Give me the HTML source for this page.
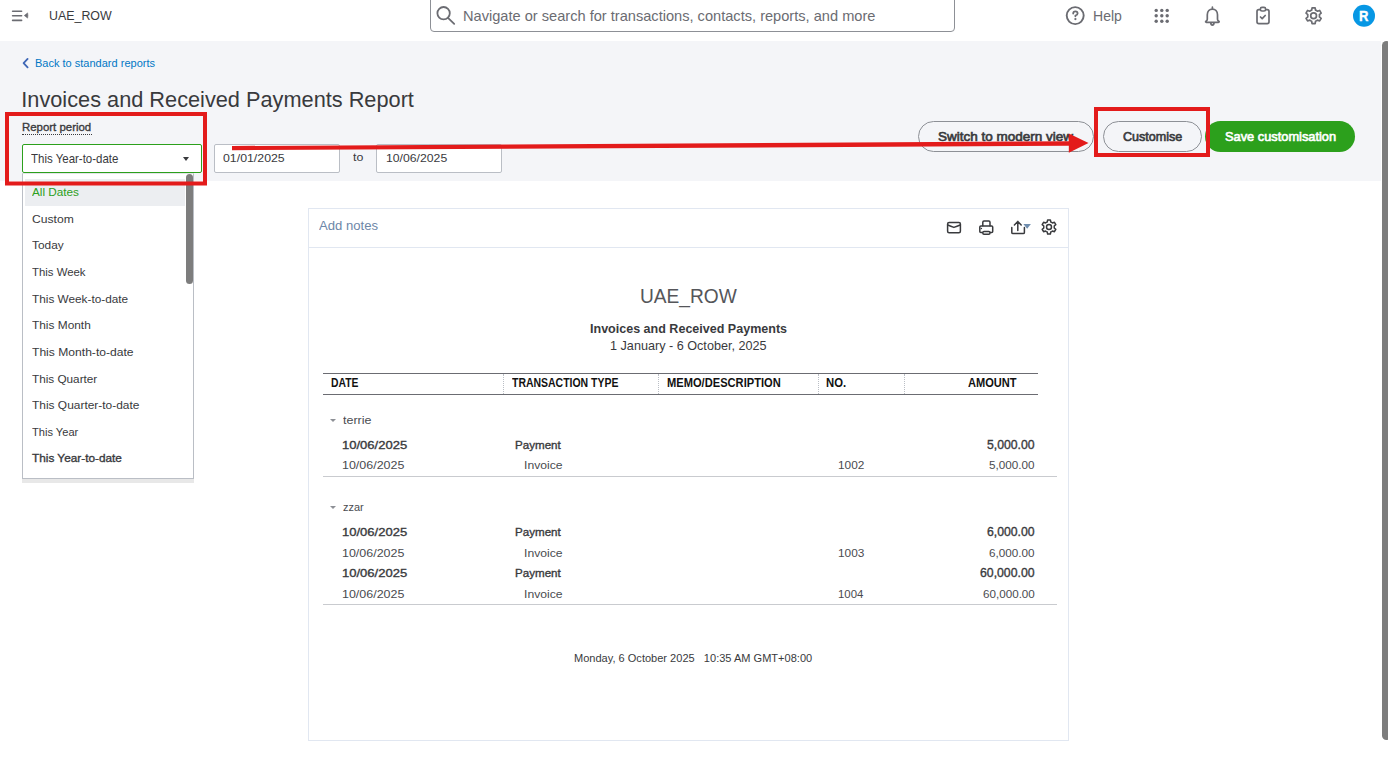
<!DOCTYPE html>
<html><head><meta charset="utf-8">
<style>
html,body{margin:0;padding:0;}
body{width:1388px;height:763px;overflow:hidden;position:relative;background:#fff;font-family:"Liberation Sans",sans-serif;}
.t{position:absolute;white-space:pre;transform-origin:0 0;}
.abs{position:absolute;}
.tri{position:absolute;width:0;height:0;border-left:3px solid transparent;border-right:3px solid transparent;border-top:3px solid #8D9096;}
</style></head><body>
<!-- header band -->
<div class="abs" style="left:0;top:41px;width:1381px;height:140px;background:#F4F5F8"></div>
<!-- page scrollbar -->
<div class="abs" style="left:1382px;top:41px;width:9px;height:699px;background:#7D7D7D;border-radius:4.5px"></div>

<!-- top bar icons -->
<svg class="abs" style="left:0;top:0" width="1388" height="41" viewBox="0 0 1388 41">
  <g stroke="#6B6C72" stroke-width="1.6" stroke-linecap="round" fill="none">
    <line x1="12.6" y1="11.2" x2="21.6" y2="11.2"/><line x1="12.6" y1="15.8" x2="21.6" y2="15.8"/><line x1="12.6" y1="20.4" x2="21.6" y2="20.4"/>
  </g>
  <path d="M24.3 15.5 L27.6 12.9 L27.9 15.5 L27.6 18.1 Z" fill="#6B6C72" stroke="#6B6C72" stroke-width="0.6" stroke-linejoin="round"/>
  <!-- search magnifier -->
  <g stroke="#6B6C72" stroke-width="1.8" fill="none" stroke-linecap="round">
    <circle cx="443.6" cy="13.2" r="6.2"/><line x1="448" y1="17.8" x2="454.2" y2="23.8"/>
  </g>
  <!-- help -->
  <circle cx="1075.2" cy="15.6" r="8.5" stroke="#6B6C72" stroke-width="1.9" fill="none"/>
  <path d="M1073.2 13.6 Q1073.2 11.4 1075.4 11.4 Q1077.6 11.4 1077.6 13.4 Q1077.6 14.8 1075.4 15.5 L1075.4 16.3" stroke="#6B6C72" stroke-width="1.8" fill="none" stroke-linecap="round" stroke-linejoin="round"/>
  <circle cx="1075.4" cy="19.1" r="1.15" fill="#6B6C72"/>
  <!-- grid -->
  <g fill="#6B6C72">
    <circle cx="1156.2" cy="10.4" r="1.7"/><circle cx="1161.8" cy="10.4" r="1.7"/><circle cx="1167.2" cy="10.4" r="1.7"/>
    <circle cx="1156.2" cy="15.8" r="1.7"/><circle cx="1161.8" cy="15.8" r="1.7"/><circle cx="1167.2" cy="15.8" r="1.7"/>
    <circle cx="1156.2" cy="21.2" r="1.7"/><circle cx="1161.8" cy="21.2" r="1.7"/><circle cx="1167.2" cy="21.2" r="1.7"/>
  </g>
  <!-- bell -->
  <path d="M1212.4 7.2 L1212.4 9.1 M1207.3 19.2 L1207.3 14.8 C1207.3 11.4 1209.6 9.1 1212.4 9.1 C1215.2 9.1 1217.5 11.4 1217.5 14.8 L1217.5 19.2 C1217.5 20.2 1218.4 20.9 1218.9 21.3 C1219.5 21.8 1219.2 22.3 1218.5 22.3 L1206.3 22.3 C1205.6 22.3 1205.3 21.8 1205.9 21.3 C1206.4 20.9 1207.3 20.2 1207.3 19.2 Z M1210.7 22.6 C1210.9 24.3 1211.6 25.1 1212.4 25.1 C1213.2 25.1 1213.9 24.3 1214.1 22.6" stroke="#6B6C72" stroke-width="1.7" fill="none" stroke-linejoin="round" stroke-linecap="round"/>
  <!-- clipboard -->
  <rect x="1257" y="9.6" width="12" height="14" rx="1.8" stroke="#6B6C72" stroke-width="1.7" fill="none"/>
  <rect x="1260.4" y="7.4" width="5.2" height="3.6" rx="1.6" stroke="#6B6C72" stroke-width="1.6" fill="#fff"/>
  <path d="M1260.5 17 L1262.2 18.7 L1265.2 15.5" stroke="#6B6C72" stroke-width="1.7" fill="none" stroke-linecap="round" stroke-linejoin="round"/>
  <!-- gear -->
  <path d="M1316.55 10.59 L1315.52 10.12 L1315.13 7.85 L1312.07 7.85 L1311.68 10.12 L1310.65 10.59 L1309.73 11.25 L1307.56 10.45 L1306.04 13.10 L1307.81 14.57 L1307.70 15.70 L1307.81 16.83 L1306.04 18.30 L1307.56 20.95 L1309.73 20.15 L1310.65 20.81 L1311.68 21.28 L1312.07 23.55 L1315.13 23.55 L1315.52 21.28 L1316.55 20.81 L1317.47 20.15 L1319.64 20.95 L1321.16 18.30 L1319.39 16.83 L1319.50 15.70 L1319.39 14.57 L1321.16 13.10 L1319.64 10.45 L1317.47 11.25 Z" stroke="#6B6C72" stroke-width="1.7" fill="none" stroke-linejoin="round"/>
  <circle cx="1313.6" cy="15.7" r="2.9" stroke="#6B6C72" stroke-width="1.7" fill="none"/>
  <!-- avatar -->
  <circle cx="1364" cy="15.8" r="11" fill="#0797E4"/>
  <text transform="translate(1363.8 21.1) scale(0.92 1)" x="0" y="0" text-anchor="middle" font-family="Liberation Sans" font-weight="700" font-size="14.2" fill="#fff" stroke="#fff" stroke-width="0.35">R</text>
</svg>
<!-- search box -->
<div class="abs" style="left:430px;top:-4px;width:523px;height:34px;border:1px solid #8D9096;border-radius:4px;"></div>

<!-- back chevron -->
<svg class="abs" style="left:20px;top:56px" width="12" height="14" viewBox="0 0 12 14"><path d="M7.6 2.9 L3.6 7.1 L7.6 11.3" stroke="#3F67B6" stroke-width="1.8" fill="none" stroke-linecap="round" stroke-linejoin="round"/></svg>
<!-- report period dotted underline -->
<div class="abs" style="left:21.8px;top:134px;width:70px;height:0;border-top:1px dotted #393A3D"></div>

<!-- select -->
<div class="abs" style="left:22px;top:144px;width:178px;height:27px;border:1px solid #2CA01C;border-radius:2px;background:#fff"></div>
<div class="abs" style="left:183px;top:156.5px;width:0;height:0;border-left:3.2px solid transparent;border-right:3.2px solid transparent;border-top:4.6px solid #393A3D"></div>
<!-- date inputs -->
<div class="abs" style="left:214px;top:144px;width:124px;height:27px;border:1px solid #BABEC5;border-radius:2px;background:#fff"></div>
<div class="abs" style="left:376px;top:144px;width:124px;height:27px;border:1px solid #BABEC5;border-radius:2px;background:#fff"></div>

<!-- buttons -->
<div class="abs" style="left:918px;top:121px;width:174px;height:29px;border:1px solid #8D9096;border-radius:16px;"></div>
<div class="abs" style="left:1103px;top:121px;width:97.2px;height:29px;border:1px solid #8D9096;border-radius:16px;"></div>
<div class="abs" style="left:1204.8px;top:120.5px;width:150.5px;height:31.5px;background:#2CA01C;border-radius:16px;"></div>

<!-- dropdown -->
<div class="abs" style="left:22px;top:173px;width:170px;height:304px;border:1px solid #BABEC5;border-top-color:#E3E5E8;background:#fff;box-shadow:0 4px 0 0 rgba(0,0,0,0.09)"></div>
<div class="abs" style="left:25px;top:178.5px;width:160px;height:27px;background:#ECEEF1"></div>
<div class="abs" style="left:186px;top:174px;width:7px;height:110px;background:#7D7D7D;border-radius:3.5px"></div>

<!-- report card -->
<div class="abs" style="left:308px;top:208px;width:759px;height:531px;border:1px solid #E1E7F1;background:#fff"></div>
<div class="abs" style="left:309px;top:247px;width:759px;height:1px;background:#E1E7F1"></div>
<svg class="abs" style="left:940px;top:214px" width="125" height="26" viewBox="940 214 125 26">
  <g stroke="#393A3D" stroke-width="1.5" fill="none" stroke-linejoin="round" stroke-linecap="round">
    <rect x="947.6" y="222.5" width="12.8" height="10.2" rx="1.5"/>
    <path d="M947.8 225 Q950.9 226.3 953.9 227.4 Q957 226.3 960.2 225"/>
    <path d="M982.8 225.8 L982.8 222.2 Q982.8 221 984 221 L988.8 221 Q990 221 990 222.2 L990 225.8"/>
    <path d="M982.2 232.6 L980.8 232.6 Q979.8 232.6 979.8 231.6 L979.8 227 Q979.8 225.9 980.9 225.9 L991.6 225.9 Q992.7 225.9 992.7 227 L992.7 231.6 Q992.7 232.6 991.7 232.6 L990.4 232.6"/>
    <rect x="982.8" y="231.4" width="7.2" height="2.9" rx="1.2"/>
    <path d="M1011.8 227.6 L1011.8 232.4 Q1011.8 233.6 1013 233.6 L1023.2 233.6 Q1024.4 233.6 1024.4 232.4 L1024.4 227.6"/>
    <path d="M1017.8 230.6 L1017.8 221.6 M1014.4 225 L1017.8 221.4 L1021.2 225"/>
    <path d="M1051.65 222.41 L1050.73 221.99 L1050.37 219.93 L1047.63 219.93 L1047.27 221.99 L1046.35 222.41 L1045.52 223.00 L1043.57 222.28 L1042.19 224.66 L1043.80 225.99 L1043.70 227.00 L1043.80 228.01 L1042.19 229.34 L1043.57 231.72 L1045.52 231.00 L1046.35 231.59 L1047.27 232.01 L1047.63 234.07 L1050.37 234.07 L1050.73 232.01 L1051.65 231.59 L1052.48 231.00 L1054.43 231.72 L1055.81 229.34 L1054.20 228.01 L1054.30 227.00 L1054.20 225.99 L1055.81 224.66 L1054.43 222.28 L1052.48 223.00 Z"/>
    <circle cx="1049" cy="227" r="2.5"/>
  </g>
  <circle cx="981.4" cy="228.4" r="0.75" fill="#393A3D"/>
  <path d="M1023.4 223.9 L1030.9 223.9 L1027.15 228.8 Z" fill="#6F8DAE"/>
</svg>

<!-- table lines -->
<div class="abs" style="left:323px;top:373px;width:715px;height:1px;background:#6B6C72"></div>
<div class="abs" style="left:323px;top:394px;width:715px;height:1px;background:#6B6C72"></div>
<div class="abs" style="left:503px;top:374px;width:0;height:20px;border-left:1px dotted #BABEC5"></div>
<div class="abs" style="left:657.5px;top:374px;width:0;height:20px;border-left:1px dotted #BABEC5"></div>
<div class="abs" style="left:818px;top:374px;width:0;height:20px;border-left:1px dotted #BABEC5"></div>
<div class="abs" style="left:904px;top:374px;width:0;height:20px;border-left:1px dotted #BABEC5"></div>
<div class="abs" style="left:323px;top:476px;width:734px;height:1px;background:#C9CBCF"></div>
<div class="abs" style="left:323px;top:604px;width:734px;height:1px;background:#C9CBCF"></div>

<div class="tri" style="left:330px;top:419px"></div>
<div class="tri" style="left:330px;top:506px"></div>
<div class="t" style="left:48.66px;top:9px;font-size:13.19px;line-height:13.19px;font-weight:400;color:#393A3D;transform:scaleX(0.9406);">UAE_ROW</div>
<div class="t" style="left:462.97px;top:9px;font-size:14.2px;line-height:14.2px;font-weight:400;color:#6B6C72;transform:scaleX(1.0295);">Navigate or search for transactions, contacts, reports, and more</div>
<div class="t" style="left:1092.98px;top:10px;font-size:13.77px;line-height:13.77px;font-weight:400;color:#6B6C72;transform:scaleX(1.0197);">Help</div>
<div class="t" style="left:35.00px;top:58px;font-size:11.16px;line-height:11.16px;font-weight:400;color:#0077C5;transform:scaleX(0.9872);">Back to standard reports</div>
<div class="t" style="left:21.29px;top:89px;font-size:21.74px;line-height:21.74px;font-weight:400;color:#393A3D;">Invoices and Received Payments Report</div>
<div class="t" style="left:22.27px;top:122px;font-size:11.59px;line-height:11.59px;-webkit-text-stroke:0.35px #393A3D;color:#393A3D;transform:scaleX(0.9862);">Report period</div>
<div class="t" style="left:31.10px;top:153px;font-size:12.03px;line-height:12.03px;font-weight:400;color:#393A3D;transform:scaleX(0.9550);">This Year-to-date</div>
<div class="t" style="left:222.70px;top:152px;font-size:11.74px;line-height:11.74px;font-weight:400;color:#393A3D;transform:scaleX(1.0506);">01/01/2025</div>
<div class="t" style="left:352.70px;top:153px;font-size:10.14px;line-height:10.14px;font-weight:400;color:#393A3D;transform:scaleX(1.2255);">to</div>
<div class="t" style="left:385.80px;top:153px;font-size:11.3px;line-height:11.3px;font-weight:400;color:#393A3D;transform:scaleX(1.0825);">10/06/2025</div>
<div class="t" style="left:937.74px;top:130px;font-size:13.04px;line-height:13.04px;-webkit-text-stroke:0.65px #393A3D;color:#393A3D;transform:scaleX(1.0349);">Switch to modern view</div>
<div class="t" style="left:1123.31px;top:130px;font-size:13.04px;line-height:13.04px;-webkit-text-stroke:0.65px #393A3D;color:#393A3D;transform:scaleX(0.9636);">Customise</div>
<div class="t" style="left:1224.82px;top:130px;font-size:13.04px;line-height:13.04px;-webkit-text-stroke:0.65px #FFFFFF;color:#FFFFFF;transform:scaleX(0.9833);">Save customisation</div>
<div class="t" style="left:318.90px;top:219px;font-size:13.48px;line-height:13.48px;font-weight:400;color:#6D87A8;transform:scaleX(0.9734);">Add notes</div>
<div class="t" style="left:640.04px;top:286px;font-size:20.0px;line-height:20.0px;font-weight:400;color:#55565A;transform:scaleX(0.9566);">UAE_ROW</div>
<div class="t" style="left:590.30px;top:323px;font-size:12.17px;line-height:12.17px;font-weight:700;color:#393A3D;transform:scaleX(1.0306);">Invoices and Received Payments</div>
<div class="t" style="left:610.00px;top:341px;font-size:11.88px;line-height:11.88px;font-weight:400;color:#393A3D;transform:scaleX(1.0637);">1 January - 6 October, 2025</div>
<div class="t" style="left:330.60px;top:378px;font-size:11.88px;line-height:11.88px;font-weight:700;color:#111;transform:scaleX(0.8724);">DATE</div>
<div class="t" style="left:511.70px;top:378px;font-size:11.88px;line-height:11.88px;font-weight:700;color:#111;transform:scaleX(0.8815);">TRANSACTION TYPE</div>
<div class="t" style="left:666.50px;top:378px;font-size:11.88px;line-height:11.88px;font-weight:700;color:#111;transform:scaleX(0.9369);">MEMO/DESCRIPTION</div>
<div class="t" style="left:826.20px;top:378px;font-size:11.88px;line-height:11.88px;font-weight:700;color:#111;transform:scaleX(0.9514);">NO.</div>
<div class="t" style="left:967.70px;top:378px;font-size:11.88px;line-height:11.88px;font-weight:700;color:#111;transform:scaleX(0.9327);">AMOUNT</div>
<div class="t" style="left:343.30px;top:415px;font-size:11.16px;line-height:11.16px;font-weight:400;color:#4A4B4F;transform:scaleX(1.1185);">terrie</div>
<div class="t" style="left:343.20px;top:502px;font-size:11.16px;line-height:11.16px;font-weight:400;color:#4A4B4F;transform:scaleX(0.9831);">zzar</div>
<div class="t" style="left:573.60px;top:652px;font-size:11.74px;line-height:11.74px;font-weight:400;color:#393A3D;transform:scaleX(0.9406);">Monday, 6 October 2025   10:35 AM GMT+08:00</div>
<div class="t" style="left:341.70px;top:440px;font-size:11.59px;line-height:11.59px;-webkit-text-stroke:0.35px #393A3D;color:#393A3D;transform:scaleX(1.1252);">10/06/2025</div>
<div class="t" style="left:515.48px;top:440px;font-size:11.3px;line-height:11.3px;-webkit-text-stroke:0.35px #393A3D;color:#393A3D;transform:scaleX(1.0264);">Payment</div>
<div class="t" style="left:987.38px;top:440px;font-size:11.88px;line-height:11.88px;-webkit-text-stroke:0.35px #393A3D;color:#393A3D;transform:scaleX(1.0304);">5,000.00</div>
<div class="t" style="left:341.70px;top:460px;font-size:11.45px;line-height:11.45px;font-weight:400;color:#4A4B4F;transform:scaleX(1.0900);">10/06/2025</div>
<div class="t" style="left:523.56px;top:459px;font-size:11.74px;line-height:11.74px;font-weight:400;color:#4A4B4F;transform:scaleX(1.0378);">Invoice</div>
<div class="t" style="left:838.40px;top:460px;font-size:11.45px;line-height:11.45px;font-weight:400;color:#4A4B4F;transform:scaleX(1.0366);">1002</div>
<div class="t" style="left:989.30px;top:459px;font-size:11.74px;line-height:11.74px;font-weight:400;color:#4A4B4F;transform:scaleX(0.9967);">5,000.00</div>
<div class="t" style="left:341.70px;top:527px;font-size:11.59px;line-height:11.59px;-webkit-text-stroke:0.35px #393A3D;color:#393A3D;transform:scaleX(1.1252);">10/06/2025</div>
<div class="t" style="left:515.48px;top:527px;font-size:11.3px;line-height:11.3px;-webkit-text-stroke:0.35px #393A3D;color:#393A3D;transform:scaleX(1.0264);">Payment</div>
<div class="t" style="left:987.38px;top:527px;font-size:11.88px;line-height:11.88px;-webkit-text-stroke:0.35px #393A3D;color:#393A3D;transform:scaleX(1.0304);">6,000.00</div>
<div class="t" style="left:341.70px;top:548px;font-size:11.45px;line-height:11.45px;font-weight:400;color:#4A4B4F;transform:scaleX(1.0900);">10/06/2025</div>
<div class="t" style="left:523.56px;top:547px;font-size:11.74px;line-height:11.74px;font-weight:400;color:#4A4B4F;transform:scaleX(1.0378);">Invoice</div>
<div class="t" style="left:838.40px;top:548px;font-size:11.45px;line-height:11.45px;font-weight:400;color:#4A4B4F;transform:scaleX(1.0366);">1003</div>
<div class="t" style="left:989.30px;top:547px;font-size:11.74px;line-height:11.74px;font-weight:400;color:#4A4B4F;transform:scaleX(0.9967);">6,000.00</div>
<div class="t" style="left:341.70px;top:568px;font-size:11.59px;line-height:11.59px;-webkit-text-stroke:0.35px #393A3D;color:#393A3D;transform:scaleX(1.1252);">10/06/2025</div>
<div class="t" style="left:515.48px;top:568px;font-size:11.3px;line-height:11.3px;-webkit-text-stroke:0.35px #393A3D;color:#393A3D;transform:scaleX(1.0264);">Payment</div>
<div class="t" style="left:980.48px;top:568px;font-size:11.88px;line-height:11.88px;-webkit-text-stroke:0.35px #393A3D;color:#393A3D;transform:scaleX(1.0322);">60,000.00</div>
<div class="t" style="left:341.70px;top:589px;font-size:11.45px;line-height:11.45px;font-weight:400;color:#4A4B4F;transform:scaleX(1.0900);">10/06/2025</div>
<div class="t" style="left:523.56px;top:588px;font-size:11.74px;line-height:11.74px;font-weight:400;color:#4A4B4F;transform:scaleX(1.0378);">Invoice</div>
<div class="t" style="left:838.40px;top:589px;font-size:11.45px;line-height:11.45px;font-weight:400;color:#4A4B4F;transform:scaleX(0.9968);">1004</div>
<div class="t" style="left:983.00px;top:588px;font-size:11.74px;line-height:11.74px;font-weight:400;color:#4A4B4F;transform:scaleX(0.9928);">60,000.00</div>
<div class="t" style="left:32.30px;top:187px;font-size:11.59px;line-height:11.59px;font-weight:400;color:#2CA01C;transform:scaleX(1.0142);">All Dates</div>
<div class="t" style="left:32.30px;top:214px;font-size:11.59px;line-height:11.59px;font-weight:400;color:#393A3D;transform:scaleX(1.0473);">Custom</div>
<div class="t" style="left:32.30px;top:240px;font-size:11.59px;line-height:11.59px;font-weight:400;color:#393A3D;transform:scaleX(1.0255);">Today</div>
<div class="t" style="left:32.30px;top:267px;font-size:11.59px;line-height:11.59px;font-weight:400;color:#393A3D;transform:scaleX(0.9820);">This Week</div>
<div class="t" style="left:32.30px;top:294px;font-size:11.59px;line-height:11.59px;font-weight:400;color:#393A3D;transform:scaleX(1.0188);">This Week-to-date</div>
<div class="t" style="left:32.30px;top:320px;font-size:11.59px;line-height:11.59px;font-weight:400;color:#393A3D;transform:scaleX(1.0259);">This Month</div>
<div class="t" style="left:32.30px;top:347px;font-size:11.59px;line-height:11.59px;font-weight:400;color:#393A3D;transform:scaleX(1.0452);">This Month-to-date</div>
<div class="t" style="left:32.30px;top:374px;font-size:11.59px;line-height:11.59px;font-weight:400;color:#393A3D;transform:scaleX(1.0142);">This Quarter</div>
<div class="t" style="left:32.30px;top:400px;font-size:11.59px;line-height:11.59px;font-weight:400;color:#393A3D;transform:scaleX(1.0308);">This Quarter-to-date</div>
<div class="t" style="left:32.30px;top:427px;font-size:11.59px;line-height:11.59px;font-weight:400;color:#393A3D;transform:scaleX(0.9583);">This Year</div>
<div class="t" style="left:32.48px;top:453px;font-size:11.59px;line-height:11.59px;-webkit-text-stroke:0.35px #393A3D;color:#393A3D;transform:scaleX(1.0193);">This Year-to-date</div>
<!-- red annotations -->
<svg class="abs" style="left:0;top:0" width="1388" height="763" viewBox="0 0 1388 763">
  <rect x="7" y="114" width="198" height="69.5" stroke="#E31B1B" stroke-width="4" fill="none"/>
  <rect x="1096" y="109" width="112" height="46" stroke="#E31B1B" stroke-width="4" fill="none"/>
  <path d="M232 146 L1069 141.3 L1069 145.8 L232 150.2 Z" fill="#E31B1B"/>
  <path d="M1068.8 133.5 L1088.5 143.1 L1068.8 152.7 Z" fill="#E31B1B"/>
</svg>
</body></html>
